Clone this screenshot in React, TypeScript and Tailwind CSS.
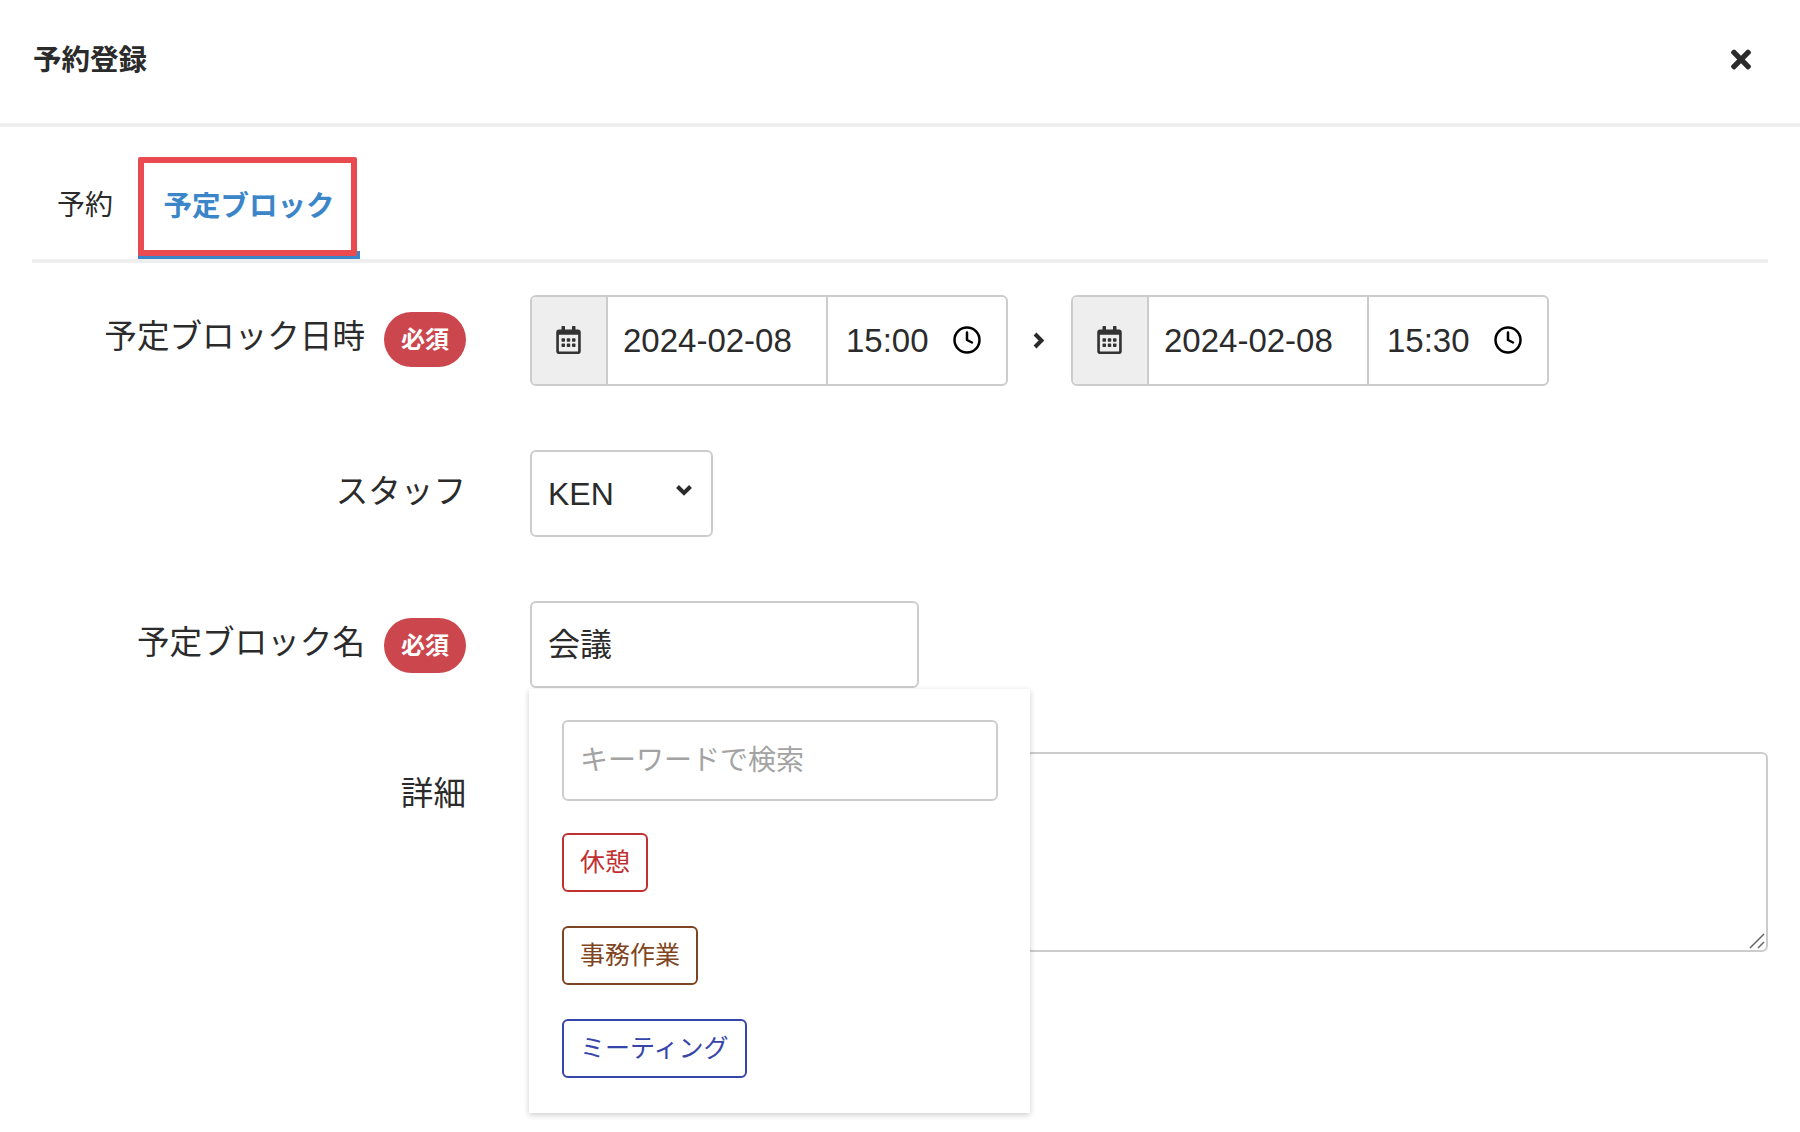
import { Clock } from "lucide-react";
import { FaRegCalendarAlt, FaTimes } from "react-icons/fa";

const fontStack =
  '"Liberation Sans", "Noto Sans CJK JP", sans-serif';

function RequiredBadge() {
  return (
    <span className="flex h-[55px] w-[82px] shrink-0 items-center justify-center rounded-full bg-[#cc464e] text-[24px] font-bold text-white">
      必須
    </span>
  );
}

function DateTimeGroup({ date, time }: { date: string; time: string }) {
  return (
    <div className="flex h-[91px] w-[478px] overflow-hidden rounded-[6px] border-2 border-[#cccccc]">
      <div className="flex w-[76px] shrink-0 items-center justify-center border-r-2 border-[#cccccc] bg-[#eeeeee]">
        <FaRegCalendarAlt className="mb-[2px] mr-[2px] h-[28px] w-[25px] text-[#333333]" />
      </div>
      <div className="flex w-[220px] shrink-0 items-center border-r-2 border-[#cccccc] pl-[15px] text-[33px]">
        {date}
      </div>
      <div className="flex flex-1 items-center justify-between pl-[18px] pr-[24px] text-[33px]">
        {time}
        <Clock className="mb-[1px] h-[30px] w-[30px] text-black" strokeWidth={2} />
      </div>
    </div>
  );
}

function FormRow({
  label,
  required,
  className,
  children,
}: {
  label: string;
  required?: boolean;
  className?: string;
  children: React.ReactNode;
}) {
  return (
    <div className={`flex items-start ${className ?? ""}`}>
      <div className="flex w-[434px] shrink-0 items-start justify-end gap-[19px]">
        <span className="mt-[18px] text-[32.6px] leading-[48px]">{label}</span>
        {required && (
          <span className="mt-[17px]">
            <RequiredBadge />
          </span>
        )}
      </div>
      <div className="ml-[64px] min-w-0 flex-1">{children}</div>
    </div>
  );
}

function TagChip({
  label,
  className,
}: {
  label: string;
  className: string;
}) {
  return (
    <button
      type="button"
      className={`flex h-[59px] items-center rounded-[6px] border-2 bg-white px-[16px] text-[25px] ${className}`}
    >
      {label}
    </button>
  );
}

export default function App() {
  return (
    <div
      className="relative h-[1132px] w-[1800px] overflow-hidden bg-white text-[#2b2b2b]"
      style={{ fontFamily: fontStack }}
    >
      <header className="flex h-[127px] items-center justify-between border-b-4 border-[#eeeeee] pb-[2px] pl-[33px] pr-[47px]">
        <h1 className="text-[28.5px] font-bold">予約登録</h1>
        <FaTimes className="mb-[2px] h-[29px] w-[24px] text-[#2b2b2b]" />
      </header>

      <div className="pl-[32px] pr-[32px]">
        <nav className="flex h-[136px] items-end border-b-4 border-[#eeeeee]">
          <div className="-mb-[4px] flex h-[100px] w-[106px] items-center justify-center pb-[14px] text-[28px]">
            予約
          </div>
          <div className="relative flex h-[102px] w-[222px] items-center justify-center border-b-[8px] border-[#3b86c8] pt-[4px] text-[28.5px] font-bold text-[#3b86c8]">
            予定ブロック
            <span className="absolute left-0 top-0 h-[99px] w-[219px] rounded-[2px] border-[6px] border-[#e94b50]" />
          </div>
        </nav>

        <div className="flex flex-col gap-[64px] pt-[32px]">
          <FormRow label="予定ブロック日時" required>
            <div className="flex items-center">
              <DateTimeGroup date="2024-02-08" time="15:00" />
              <div className="flex w-[63px] justify-center pr-[2px]">
                <svg
                  viewBox="0 0 13 19"
                  className="h-[19px] w-[13px] text-[#2b2b2b]"
                  fill="none"
                  stroke="currentColor"
                  strokeWidth="4"
                >
                  <path d="M3 3l6.5 6.5L3 16" />
                </svg>
              </div>
              <DateTimeGroup date="2024-02-08" time="15:30" />
            </div>
          </FormRow>

          <FormRow label="スタッフ">
            <div className="flex h-[87px] w-[183px] items-center justify-between rounded-[6px] border-2 border-[#cccccc] pl-[16px] pr-[18px] text-[32px]">
              KEN
              <svg
                viewBox="0 0 18 13"
                className="mb-[6px] h-[13px] w-[18px] text-[#2b2b2b]"
                fill="none"
                stroke="currentColor"
                strokeWidth="4"
              >
                <path d="M2.5 2.5L9 9l6.5-6.5" />
              </svg>
            </div>
          </FormRow>

          <FormRow label="予定ブロック名" required>
            <div className="relative w-[389px]">
              <div className="flex h-[87px] items-center rounded-[6px] border-2 border-[#cccccc] pl-[16px] text-[32px]">
                会議
              </div>
              <div className="absolute left-[-1px] top-[88px] z-10 flex w-[501px] flex-col items-start bg-white pb-[35px] pl-[33px] pt-[31px] shadow-[0_2px_6px_rgba(0,0,0,0.2)]">
                <div className="flex h-[81px] w-[436px] items-center rounded-[6px] border-2 border-[#cccccc] pl-[16px] text-[28px] text-[#a3a3a3]">
                  キーワードで検索
                </div>
                <div className="mt-[32px] flex flex-col items-start gap-[34px]">
                  <TagChip label="休憩" className="border-[#c03030] text-[#c03030]" />
                  <TagChip label="事務作業" className="border-[#7f4522] text-[#7f4522]" />
                  <TagChip label="ミーティング" className="border-[#3545ab] text-[#3545ab]" />
                </div>
              </div>
            </div>
          </FormRow>

          <FormRow label="詳細">
            <div className="relative">
              <textarea className="block h-[200px] w-full resize-none rounded-[6px] border-2 border-[#cccccc] bg-white" />
              <svg
                viewBox="0 0 16 16"
                className="absolute bottom-[3px] right-[3px] h-[16px] w-[16px] text-[#666666]"
                fill="none"
                stroke="currentColor"
                strokeWidth="1.5"
              >
                <path d="M1 15L15 1M9 15l6-6" />
              </svg>
            </div>
          </FormRow>
        </div>
      </div>
    </div>
  );
}
